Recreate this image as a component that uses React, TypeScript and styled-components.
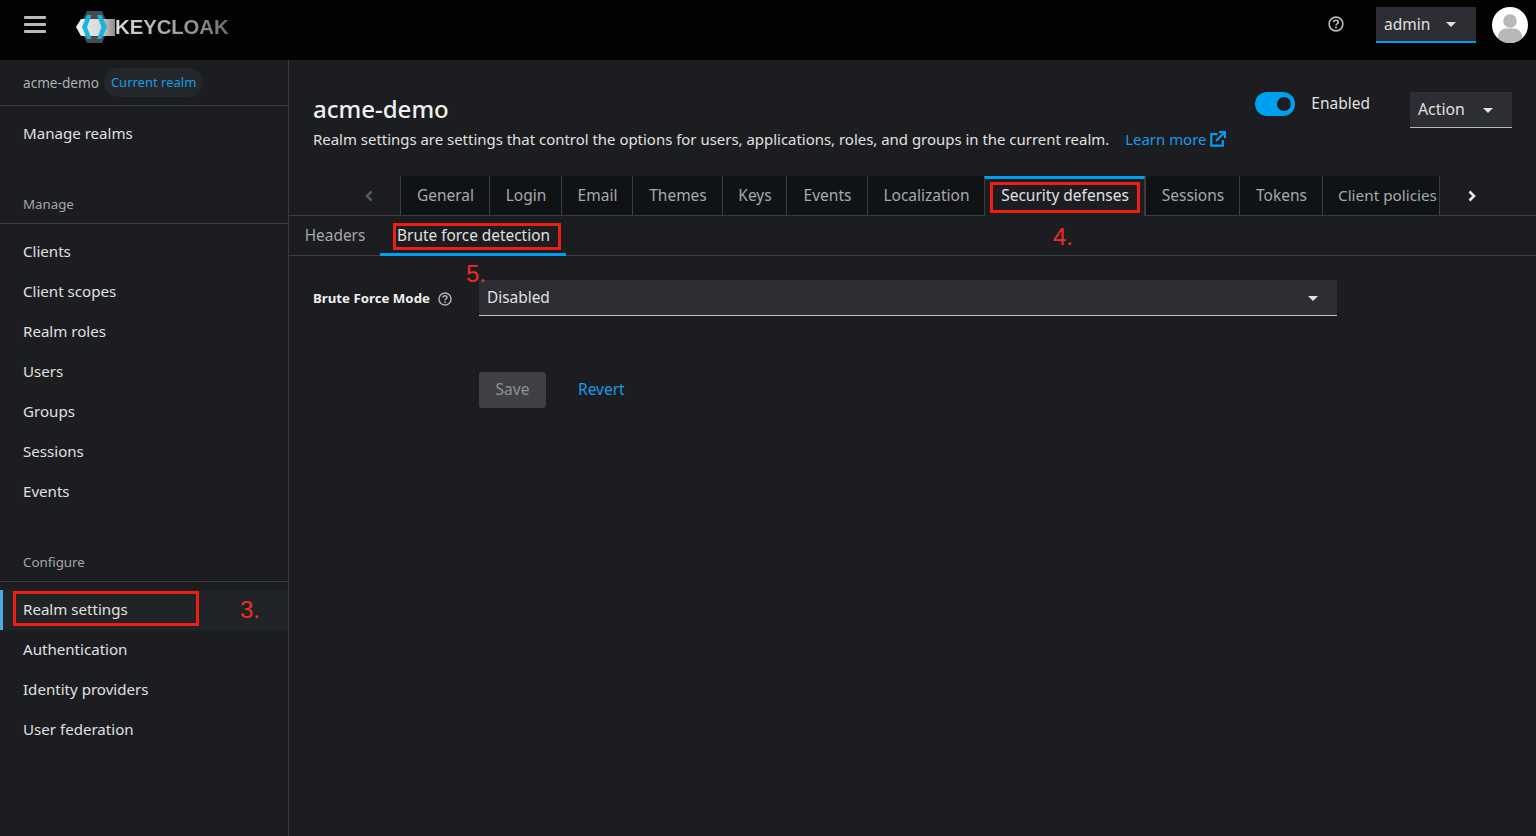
import React from "react";
import styled, { createGlobalStyle } from "styled-components";

const Global = createGlobalStyle`
  html, body { margin: 0; padding: 0; height: 100%; background: #1b1d21; }
  body { font-family: "Noto Sans", "Open Sans", sans-serif; color: #e0e0e0; font-size: 16px; overflow: hidden; }
  #root { height: 100%; }
  * { box-sizing: border-box; }
`;

const Page = styled.div`
  position: relative;
  width: 1536px;
  height: 836px;
  display: flex;
  flex-direction: column;
`;

const Header = styled.header`
  height: 60px;
  background: #030303;
  display: flex;
  align-items: center;
  flex: none;
`;
const Burger = styled.div`
  width: 22px;
  margin-left: 24px;
  margin-top: -11px;
  display: flex;
  flex-direction: column;
  gap: 3.5px;
  & > i { display: block; height: 3.5px; border-radius: 1px; background: #b8bbbe; }
`;
const LogoWrap = styled.div`
  margin-left: 30px;
  margin-top: -6px;
  display: flex;
  align-items: center;
`;
const LogoText = styled.span`
  font-family: "Liberation Sans", sans-serif;
  font-weight: 700;
  font-size: 20.4px;
  letter-spacing: -0.1px;
  margin-left: -1px;
  background: linear-gradient(90deg, #dcdcdc, #a0a0a0 55%, #6f6f6f);
  -webkit-background-clip: text;
  background-clip: text;
  color: transparent;
`;
const HeaderRight = styled.div`
  margin-left: auto;
  display: flex;
  align-items: center;
  margin-top: -10px;
`;
const HelpBtn = styled.div`
  display: flex;
  color: #b8bbbe;
  margin-right: 32px;
  margin-top: -2px;
`;
const UserSelect = styled.div`
  width: 100px;
  height: 36px;
  background: #2c2e33;
  border-bottom: 2px solid #009ff0;
  display: flex;
  align-items: center;
  padding-left: 8px;
  font-size: 15.5px;
  color: #e0e0e0;
  position: relative;
`;
const Caret = styled.span<{ $right?: number }>`
  position: absolute;
  right: ${(p) => p.$right ?? 19}px;
  top: 50%;
  margin-top: -2px;
  width: 0; height: 0;
  border-left: 5px solid transparent;
  border-right: 5px solid transparent;
  border-top: 5px solid #e0e0e0;
`;
const Avatar = styled.div`
  margin: 0 8px 0 16px;
  width: 36px; height: 36px;
  display: flex;
`;

const Body = styled.div`
  flex: 1;
  display: flex;
  min-height: 0;
`;
const Sidebar = styled.nav`
  width: 289px;
  flex: none;
  border-right: 1px solid #3a3c40;
  display: flex;
  flex-direction: column;
`;
const RealmRow = styled.div`
  height: 46px;
  border-bottom: 1px solid #3a3c40;
  display: flex;
  align-items: center;
  padding: 0 0 1px 23px;
  font-size: 13.6px;
  color: #aeb0b3;
`;
const Pill = styled.span`
  margin-left: 5px;
  height: 29px;
  border-radius: 15px;
  background: #23272b;
  color: #1a9be6;
  padding: 0 7px;
  display: flex;
  align-items: center;
  font-size: 13px;
`;
const Item = styled.a<{ $active?: boolean }>`
  display: flex;
  align-items: center;
  height: 40px;
  padding-left: ${(p) => (p.$active ? 20 : 23)}px;
  padding-bottom: 2px;
  font-size: 15.1px;
  color: #e0e0e0;
  background: ${(p) => (p.$active ? "#212427" : "transparent")};
  border-left: ${(p) => (p.$active ? "3px solid #4fa8e6" : "none")};
`;
const SectionTitle = styled.div<{ $top: number }>`
  margin-top: ${(p) => p.$top}px;
  height: 39px;
  padding: 0 0 1px 23px;
  border-bottom: 1px solid #3a3c40;
  display: flex;
  align-items: center;
  font-size: 13.3px;
  color: #a4a6a9;
`;
const NavList = styled.div<{ $pad: number }>`
  padding-top: ${(p) => p.$pad}px;
  display: flex;
  flex-direction: column;
`;

const Main = styled.main`
  flex: 1;
  min-width: 0;
  display: flex;
  flex-direction: column;
`;
const PageHead = styled.div`
  height: 116px;
  padding: 31px 24px 0 24px;
  position: relative;
  flex: none;
`;
const Title = styled.h1`
  margin: 0;
  height: 36px;
  line-height: 36px;
  font-size: 24px;
  font-weight: 500;
  color: #f0f0f0;
`;
const Desc = styled.p`
  margin: 0;
  display: flex;
  align-items: center;
  font-size: 14.95px;
  line-height: 24px;
  height: 24px;
  color: #e0e0e0;
`;
const LearnMore = styled.a`
  margin-left: 16px;
  color: #1a9be6;
  display: inline-flex;
  align-items: center;
  gap: 4px;
`;
const HeadActions = styled.div`
  position: absolute;
  top: 32px;
  right: 24px;
  display: flex;
  align-items: flex-start;
`;
const Toggle = styled.div`
  width: 40px; height: 24px;
  border-radius: 12px;
  background: #009ff0;
  position: relative;
  &::after {
    content: "";
    position: absolute;
    right: 4px; top: 5px;
    width: 14px; height: 14px;
    border-radius: 50%;
    background: #1b1d21;
  }
`;
const ToggleLabel = styled.span`
  margin-left: 16px;
  font-size: 15.5px;
  line-height: 22px;
  color: #e0e0e0;
`;
const ActionBtn = styled.div`
  margin-left: 40px;
  width: 102px;
  height: 36px;
  background: #2c2e33;
  border-bottom: 1px solid #b8bbbe;
  display: flex;
  align-items: center;
  padding-left: 8px;
  padding-bottom: 1px;
  font-size: 15.8px;
  color: #e0e0e0;
  position: relative;
`;

const TabBar = styled.div`
  height: 40px;
  flex: none;
  display: flex;
  border-bottom: 1px solid #3a3c40;
  padding-left: 48px;
`;
const ScrollBtn = styled.div<{ $w: number; $dim?: boolean }>`
  width: ${(p) => p.$w}px;
  flex: none;
  display: flex;
  align-items: center;
  justify-content: center;
  color: ${(p) => (p.$dim ? "#55585c" : "#e8e8e8")};
`;
const Tab = styled.div<{ $w: number; $active?: boolean; $last?: boolean }>`
  width: ${(p) => p.$w}px;
  flex: none;
  display: flex;
  align-items: center;
  justify-content: ${(p) => (p.$last ? "flex-start" : "center")};
  padding-left: ${(p) => (p.$last ? 15 : 1)}px;
  padding-bottom: ${(p) => (p.$active ? 6 : 2)}px;
  font-size: ${(p) => (p.$last ? 15.3 : 15.5)}px;
  white-space: nowrap;
  height: ${(p) => (p.$active ? "40px" : "39px")};
  color: ${(p) => (p.$active ? "#e0e0e0" : "#a6a8ab")};
  background: ${(p) => (p.$active ? "#1b1d21" : "#101316")};
  border-left: 1px solid #3a3c40;
  border-top: ${(p) => (p.$active ? "3px solid #009ff0" : "none")};
  border-right: ${(p) => (p.$active || p.$last ? "1px solid #3a3c40" : "none")};
`;
const SubBar = styled.div`
  height: 40px;
  flex: none;
  display: flex;
  border-bottom: 1px solid #3a3c40;
`;
const SubTab = styled.div<{ $w: number; $active?: boolean }>`
  width: ${(p) => p.$w}px;
  height: 40px;
  flex: none;
  display: flex;
  align-items: center;
  padding: 1px 0 0 1px;
  justify-content: center;
  font-size: 15.4px;
  color: ${(p) => (p.$active ? "#e0e0e0" : "#a6a8ab")};
  border-bottom: 3px solid ${(p) => (p.$active ? "#009ff0" : "transparent")};
`;

const Form = styled.div`
  padding: 24px 0 0 24px;
`;
const FormRow = styled.div`
  display: flex;
  align-items: center;
`;
const FieldLabel = styled.label`
  width: 166px;
  display: flex;
  align-items: center;
  gap: 8px;
  padding-bottom: 1px;
  font-size: 13.25px;
  font-weight: 700;
  color: #f0f0f0;
  white-space: nowrap;
  & > svg { color: #aeb0b3; margin-top: 2px; }
`;
const SelectBox = styled.div`
  width: 858px;
  height: 36px;
  background: #2c2e33;
  border-bottom: 1px solid #c4c6c9;
  display: flex;
  align-items: center;
  padding: 0 0 0 8px;
  font-size: 15.4px;
  position: relative;
`;
const Buttons = styled.div`
  margin: 56px 0 0 166px;
  display: flex;
  align-items: center;
`;
const SaveBtn = styled.div`
  width: 67px;
  height: 36px;
  background: #3e4043;
  color: #8f9194;
  border-radius: 3px;
  padding-bottom: 2px;
  display: flex;
  align-items: center;
  justify-content: center;
  font-size: 15.5px;
`;
const RevertBtn = styled.a`
  margin: 0 0 2px 32px;
  color: #1a9be6;
  font-size: 15.5px;
`;

const Mark = styled.div<{ $x: number; $y: number; $w: number; $h: number }>`
  position: absolute;
  left: ${(p) => p.$x}px;
  top: ${(p) => p.$y}px;
  width: ${(p) => p.$w}px;
  height: ${(p) => p.$h}px;
  border: 3px solid #f01d14;
  pointer-events: none;
`;
const Note = styled.span<{ $x: number; $y: number }>`
  position: absolute;
  left: ${(p) => p.$x}px;
  top: ${(p) => p.$y}px;
  color: #ee2b24;
  font-family: "Liberation Sans", sans-serif;
  font-size: 24px;
  line-height: 28px;
`;

const HelpIcon = ({ size, w }: { size: number; w: number }) => (
  <svg width={size} height={size} viewBox="0 0 16 16" fill="none" stroke="currentColor">
    <circle cx="8" cy="8" r="6.9" strokeWidth={w} />
    <path d="M5.7 6.3c0-1.3 1-2.1 2.3-2.1s2.3.8 2.3 2c0 1.7-2.3 1.6-2.3 3.2" strokeWidth={w} />
    <circle cx="8" cy="11.6" r="1" fill="currentColor" stroke="none" />
  </svg>
);

const Logo = () => (
  <svg width="40" height="32" viewBox="0 0 40 32">
    <defs>
      <linearGradient id="kc-band" x1="0" x2="1" y1="0" y2="0">
        <stop offset="0" stopColor="#f2f2f2" />
        <stop offset="0.6" stopColor="#d8d8d8" />
        <stop offset="1" stopColor="#8c8c8c" />
      </linearGradient>
    </defs>
    <polygon points="3,16 11,0 26,0 33,16 26,32 11,32" fill="#484a4d" />
    <polygon points="0,16 5,8 39,8 39,25 5,25" fill="url(#kc-band)" />
    <polygon points="11,4 15.5,4 11,16 15.5,28 11,28 6,16" fill="#18b4e0" />
    <polygon points="21,4 25.5,4 31,16 25.5,28 21,28 25.5,16" fill="#18b4e0" />
  </svg>
);

const AvatarIcon = () => (
  <svg width="36" height="36" viewBox="0 0 36 36">
    <defs>
      <clipPath id="av"><circle cx="18" cy="18" r="18" /></clipPath>
    </defs>
    <g clipPath="url(#av)">
      <rect width="36" height="36" fill="#fff" />
      <circle cx="18" cy="14" r="6.8" fill="#b8b8b8" />
      <path d="M6 36v-6c0-5 4-8.5 8-8.5h8c4 0 8 3.5 8 8.5v6z" fill="#b8b8b8" />
    </g>
  </svg>
);

const ExternalIcon = () => (
  <svg width="16" height="16" viewBox="0 0 16 16" fill="none" stroke="#0a9ceb" strokeWidth="2.2">
    <path d="M7.5 3.2H1.3v11.5h11.5V9" />
    <path d="M6 10 14 2" />
    <path d="M9 1.2h6v6" />
  </svg>
);

const Chevron = ({ dir }: { dir: "l" | "r" }) => (
  <svg width="10" height="12" viewBox="0 0 10 12" fill="none" stroke="currentColor" strokeWidth="2.6">
    <path d={dir === "l" ? "M7.5 1.5 3 6l4.5 4.5" : "M2.5 1.5 7 6l-4.5 4.5"} />
  </svg>
);

const tabs: [string, number, boolean?][] = [
  ["General", 89],
  ["Login", 72],
  ["Email", 71],
  ["Themes", 90],
  ["Keys", 64],
  ["Events", 81],
  ["Localization", 117],
  ["Security defenses", 161, true],
  ["Sessions", 94],
  ["Tokens", 83],
];

const App = () => (
  <Page>
    <Global />
    <Header>
      <Burger><i /><i /><i /></Burger>
      <LogoWrap>
        <Logo />
        <LogoText>KEYCLOAK</LogoText>
      </LogoWrap>
      <HeaderRight>
        <HelpBtn><HelpIcon size={16} w={1.6} /></HelpBtn>
        <UserSelect>admin<Caret $right={20} /></UserSelect>
        <Avatar><AvatarIcon /></Avatar>
      </HeaderRight>
    </Header>
    <Body>
      <Sidebar>
        <RealmRow>acme-demo<Pill>Current realm</Pill></RealmRow>
        <NavList $pad={8}><Item>Manage realms</Item></NavList>
        <SectionTitle $top={31}>Manage</SectionTitle>
        <NavList $pad={8}>
          {["Clients", "Client scopes", "Realm roles", "Users", "Groups", "Sessions", "Events"].map((t) => (
            <Item key={t}>{t}</Item>
          ))}
        </NavList>
        <SectionTitle $top={31}>Configure</SectionTitle>
        <NavList $pad={8}>
          <Item $active>Realm settings</Item>
          {["Authentication", "Identity providers", "User federation"].map((t) => (
            <Item key={t}>{t}</Item>
          ))}
        </NavList>
      </Sidebar>
      <Main>
        <PageHead>
          <Title>acme-demo</Title>
          <Desc>
            Realm settings are settings that control the options for users, applications, roles, and groups in the current realm.
            <LearnMore>Learn more <ExternalIcon /></LearnMore>
          </Desc>
          <HeadActions>
            <Toggle />
            <ToggleLabel>Enabled</ToggleLabel>
            <ActionBtn>Action<Caret /></ActionBtn>
          </HeadActions>
        </PageHead>
        <TabBar>
          <ScrollBtn $w={63} $dim><Chevron dir="l" /></ScrollBtn>
          {tabs.map(([t, w, a]) => (
            <Tab key={t} $w={w} $active={a}>{t}</Tab>
          ))}
          <Tab $w={118} $last>Client policies</Tab>
          <ScrollBtn $w={63}><Chevron dir="r" /></ScrollBtn>
        </TabBar>
        <SubBar>
          <SubTab $w={91}>Headers</SubTab>
          <SubTab $w={186} $active>Brute force detection</SubTab>
        </SubBar>
        <Form>
          <FormRow>
            <FieldLabel>Brute Force Mode <HelpIcon size={14} w={1.7} /></FieldLabel>
            <SelectBox>Disabled<Caret /></SelectBox>
          </FormRow>
          <Buttons>
            <SaveBtn>Save</SaveBtn>
            <RevertBtn>Revert</RevertBtn>
          </Buttons>
        </Form>
      </Main>
    </Body>
    <Mark $x={13} $y={591} $w={186} $h={35} />
    <Mark $x={990} $y={182} $w={150} $h={31} />
    <Mark $x={393} $y={223} $w={168} $h={27} />
    <Note $x={240} $y={596}>3.</Note>
    <Note $x={1053} $y={223}>4.</Note>
    <Note $x={466} $y={260}>5.</Note>
  </Page>
);

export default App;
